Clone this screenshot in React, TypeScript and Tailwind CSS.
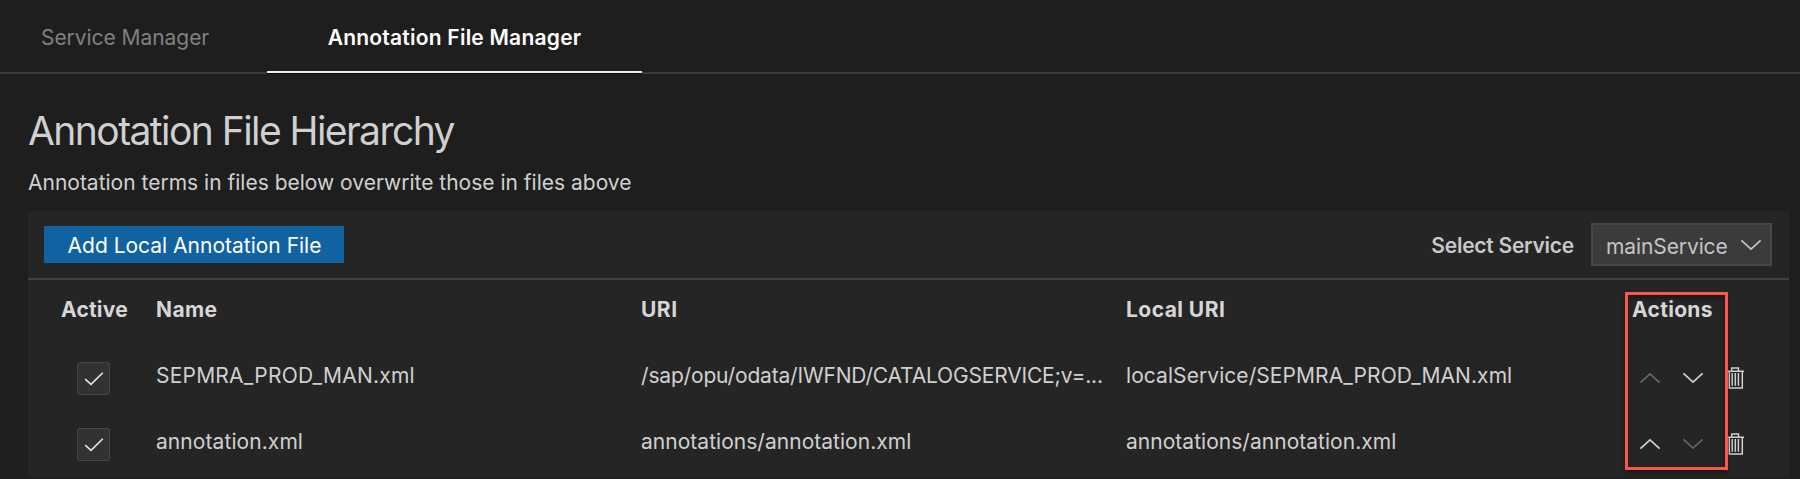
type FileRow = { name: string; uri: string; localUri: string; canMoveUp: boolean; canMoveDown: boolean };

const rows: FileRow[] = [
  {
    name: "SEPMRA_PROD_MAN.xml",
    uri: "/sap/opu/odata/IWFND/CATALOGSERVICE;v=...",
    localUri: "localService/SEPMRA_PROD_MAN.xml",
    canMoveUp: false,
    canMoveDown: true,
  },
  {
    name: "annotation.xml",
    uri: "annotations/annotation.xml",
    localUri: "annotations/annotation.xml",
    canMoveUp: true,
    canMoveDown: false,
  },
];

function Chevron({ up = false, className = "" }: { up?: boolean; className?: string }) {
  return (
    <svg viewBox="0 0 22 12" className={`block h-3 w-[22px] shrink-0 ${className}`} fill="none" stroke="currentColor" strokeWidth="1.7">
      <path d={up ? "M1.4 10.6 11 1.8l9.6 8.8" : "M1.4 1.4 11 10.2l9.6-8.8"} />
    </svg>
  );
}

function Trash() {
  return (
    <svg viewBox="0 0 18 24" className="block h-6 w-[18px] shrink-0" fill="none" stroke="#cfcfcf" strokeWidth="1.5">
      <path d="M0 5.2h16M3.7 5V2.1h6.8V5M1.3 5.2V22h13V5.2" />
      <path d="M4.2 7v12.7M7.3 7v12.7M10.4 7v12.7" />
    </svg>
  );
}

function Checkbox() {
  return (
    <span role="checkbox" aria-checked className="flex size-[33px] items-center justify-center rounded-[3px] border border-[#474747] bg-[#323232]">
      <svg viewBox="0 0 20 14" className="block h-3.5 w-5" fill="none" stroke="#e6e6e0" strokeWidth="1.6">
        <path d="M1.2 7.2 7 12.4 18.8 .8" />
      </svg>
    </span>
  );
}

export default function App() {
  return (
    <div className="h-[479px] w-[1800px] overflow-hidden bg-[#1e1e1e] font-['Inter','Liberation_Sans',sans-serif] text-[21px] leading-6 text-[#d0d0d0]">
      <nav className="flex h-[74px] border-b-2 border-[#3b3b3b] pt-[3px]">
        <button className="flex w-[267px] items-center pl-[41px] tracking-[-0.05px] text-[#808080]">Service Manager</button>
        <button className="relative flex w-[375px] items-center justify-center font-semibold tracking-[0.23px] text-white">
          Annotation File Manager
          <span className="absolute inset-x-0 -bottom-px h-[2px] bg-[#f0eef2] shadow-[0_1px_0_#0c0c0c]" />
        </button>
      </nav>
      <main className="pl-7">
        <h1 className="pt-[33px] text-[39px] leading-[48px] tracking-[-1.56px]">Annotation File Hierarchy</h1>
        <p className="pt-4">Annotation terms in files below overwrite those in files above</p>
        <section className="mt-4 h-[266px] w-[1761px] bg-[#252525]">
          <div className="flex h-[69px] items-center justify-between border-b-2 border-[#414141] pl-4 pr-[17px]">
            <button className="h-[37px] w-[300px] bg-[#1063a0] pl-px pt-0.5 text-white">Add Local Annotation File</button>
            <div className="flex items-center">
              <span className="mr-[17px] pt-0.5 font-semibold tracking-[-0.25px] text-[#c8c8c8]">Select Service</span>
              <div className="flex h-[43px] w-[181px] items-center border-2 border-[#474747] bg-[#3b3b3b] pl-[13px] text-[#c4c4c4]">
                <span className="pt-1 tracking-[-0.1px]">mainService</span>
                <Chevron className="ml-3" />
              </div>
            </div>
          </div>
          <div className="relative">
            <div className="grid grid-cols-[128px_485px_485px_506px_1fr] pb-10 pt-[18px] font-bold text-[#d6d6d6]">
              <span className="pl-[33px] tracking-[0.2px]">Active</span>
              <span className="tracking-[0.4px]">Name</span>
              <span className="tracking-[0.5px]">URI</span>
              <span className="tracking-[0.45px]">Local URI</span>
              <span className="tracking-[0.3px]">Actions</span>
            </div>
            {rows.map((row) => (
              <div key={row.name} className="grid h-[66px] grid-cols-[128px_485px_485px_500px_1fr]">
                <div className="pl-[49px]">
                  <Checkbox />
                </div>
                <span className={row.canMoveDown ? "pt-0.5 tracking-[0.22px]" : "pt-0.5 tracking-[0.08px]"}>{row.name}</span>
                <span className={row.canMoveDown ? "pt-0.5 tracking-[-0.18px]" : "pt-0.5 tracking-[0.03px]"}>{row.uri}</span>
                <span className={row.canMoveDown ? "pt-0.5 tracking-[0.07px]" : "pt-0.5 tracking-[0.03px]"}>{row.localUri}</span>
                <div className="flex pl-[13px] pt-1">
                  <Chevron up className={row.canMoveUp ? "mt-1.5 text-[#d0d0d0]" : "mt-1.5 text-[#686868]"} />
                  <Chevron className={row.canMoveDown ? "ml-[21px] mr-6 mt-1.5 text-[#d0d0d0]" : "ml-[21px] mr-6 mt-1.5 text-[#646464]"} />
                  <Trash />
                </div>
              </div>
            ))}
            <div className="absolute left-[1597px] top-3 h-[178px] w-[103px] border-[3px] border-[#fb574a] shadow-[0_3px_4px_rgba(0,0,0,0.35),inset_0_3px_4px_rgba(0,0,0,0.35)]" />
          </div>
        </section>
      </main>
    </div>
  );
}
